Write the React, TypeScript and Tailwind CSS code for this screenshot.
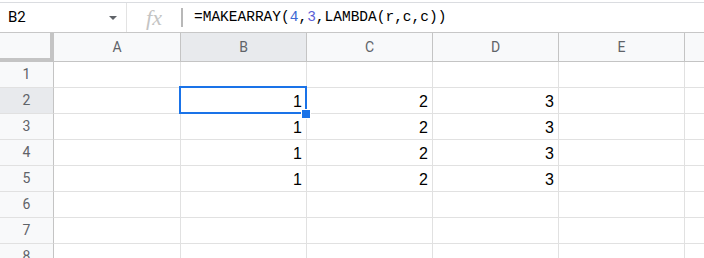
import React from "react";

const cols = ["A", "B", "C", "D", "E", ""];
const rows = [1, 2, 3, 4, 5, 6, 7, 8];

// values shown by the MAKEARRAY spill, keyed by row
const spill: Record<number, string[]> = {
  2: ["1", "2", "3"],
  3: ["1", "2", "3"],
  4: ["1", "2", "3"],
  5: ["1", "2", "3"],
};

function FormulaBar() {
  return (
    <div className="flex h-[31px] items-center border-t border-b border-t-[#dadce0] border-b-[#c7c7c7] bg-white">
      <div className="flex w-[126px] items-center pl-[8px] pr-[8px]">
        <span className="flex-1 font-['Roboto',sans-serif] text-[15px] text-black">B2</span>
        <svg width="8" height="4" viewBox="0 0 8 4" className="mr-[1px]">
          <path d="M0 0h8L4 4z" fill="#5f6368" />
        </svg>
      </div>
      <div className="h-full w-px bg-[#e3e3e3]" />
      <div className="flex w-[54px] items-center justify-center">
        <span className="font-['Liberation_Serif',serif] text-[22px] italic leading-none text-[#c4c4c4]">
          fx
        </span>
      </div>
      <div className="h-[19px] w-[2px] bg-[#b8b8b8]" />
      <div className="pl-[11px] font-['Liberation_Mono',monospace] text-[14.5px] text-black">
        =MAKEARRAY(<span className="text-[#3b68d4]">4</span>,
        <span className="text-[#5c5fd6]">3</span>,LAMBDA(r,c,c))
      </div>
    </div>
  );
}

export default function App() {
  return (
    <div className="h-[258px] w-[704px] overflow-hidden bg-white pt-[2px]">
      <FormulaBar />
      <div className="grid grid-cols-[54px_127px_126px_126px_126px_126px_126px] font-['Roboto',sans-serif]">
        {/* column headers */}
        <div className="h-[29px] border-r-4 border-b-4 border-[#c4c4c4] bg-[#f8f9fa]" />
        {cols.map((c, i) => (
          <div
            key={i}
            className={`flex h-[29px] items-center justify-center border-r border-b border-[#c4c4c4] text-[14px] text-[#5f6368] ${
              c === "B" ? "bg-[#e8eaed]" : "bg-[#f8f9fa]"
            }`}
          >
            {c}
          </div>
        ))}

        {/* rows */}
        {rows.map((r) => (
          <React.Fragment key={r}>
            <div
              className={`flex h-[26px] items-center justify-center border-r border-b border-r-[#c4c4c4] border-b-[#e1e1e1] text-[14px] text-[#5f6368] ${
                r === 2 ? "bg-[#e8eaed]" : "bg-[#f8f9fa]"
              }`}
            >
              {r}
            </div>
            {cols.map((c, i) => {
              const val = spill[r] && i >= 1 && i <= 3 ? spill[r][i - 1] : "";
              const selected = r === 2 && c === "B";
              return (
                <div
                  key={i}
                  className={`relative h-[26px] border-r border-b border-[#e1e1e1] pr-[4px] text-right font-['Liberation_Sans',Arial,sans-serif] text-[16px] leading-[28px] text-black ${
                    selected ? "z-10" : ""
                  }`}
                >
                  {val}
                  {selected && (
                    <>
                      <div className="absolute -top-[2px] -left-[2px] -right-px -bottom-px border-2 border-[#1a73e8]" />
                      <div className="absolute -right-[4px] -bottom-[5px] h-[8px] w-[8px] bg-[#1a73e8] outline outline-1 outline-white" />
                    </>
                  )}
                </div>
              );
            })}
          </React.Fragment>
        ))}
      </div>
    </div>
  );
}
